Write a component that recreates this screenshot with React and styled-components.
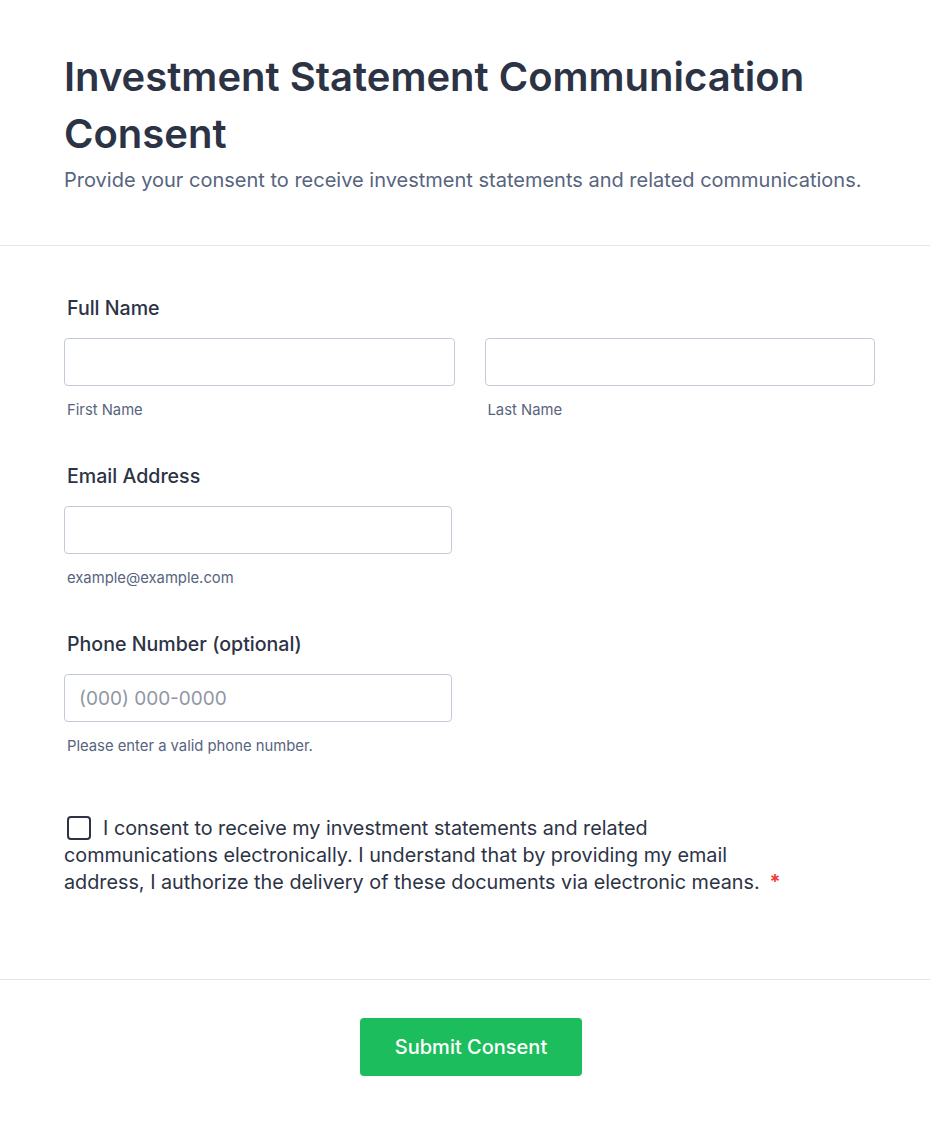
import React from "react";
import styled, { createGlobalStyle } from "styled-components";

const Global = createGlobalStyle`
  html, body { margin: 0; padding: 0; background: #ffffff; }
  body { font-family: Inter, "Noto Sans", sans-serif; color: #2c3345; }
  * { box-sizing: border-box; }
`;

const Page = styled.div`
  width: 930px;
  background: #ffffff;
`;

const Header = styled.header`
  padding: 48px 64px 51px;
  border-bottom: 1px solid #e3e5ee;
`;

const Title = styled.h1`
  margin: 0;
  font-size: 40px;
  line-height: 57px;
  font-weight: 600;
  color: #2c3345;
`;

const Subtitle = styled.p`
  margin: 4px 0 0;
  font-size: 20px;
  line-height: 28px;
  color: #57647e;
`;

const Form = styled.form`
  padding: 48px 55px 83px 64px;
  display: flex;
  flex-direction: column;
  gap: 43px;
  border-bottom: 1px solid #e3e5ee;
`;

const Field = styled.div`
  display: flex;
  flex-direction: column;
`;

const Label = styled.label`
  font-size: 19.6px;
  font-weight: 500;
  line-height: 28px;
  color: #2c3345;
  padding-left: 3px;
  margin-bottom: 16px;
`;

const Row = styled.div`
  display: grid;
  grid-template-columns: ${(p) => p.$cols || "1fr"};
  column-gap: 30px;
`;

const Cell = styled.div`
  display: flex;
  flex-direction: column;
`;

const Input = styled.input`
  width: ${(p) => p.$w || "100%"};
  height: 48px;
  border: 1px solid #c3cad8;
  border-radius: 4px;
  padding: 0 14px;
  font-family: Inter, "Noto Sans", sans-serif;
  font-size: 19px;
  color: #2c3345;
  background: #ffffff;
  outline: none;
  &::placeholder { color: #8f96a3; }
`;

const Sub = styled.span`
  margin-top: 15px;
  padding-left: 3px;
  font-size: 14.8px;
  line-height: 18px;
  color: #57647e;
`;

const Consent = styled.div`
  margin-top: 17px;
  max-width: 730px;
  font-size: 19.8px;
  line-height: 27px;
  color: #2c3345;
`;

const Box = styled.span`
  display: inline-block;
  width: 24px;
  height: 24px;
  border: 2px solid #2c3345;
  border-radius: 4px;
  vertical-align: -5px;
  margin: 0 12px 0 3px;
`;

const Star = styled.span`
  color: #f23a3c;
  margin-left: 10px;
  font-weight: 700;
`;

const Footer = styled.div`
  display: flex;
  justify-content: center;
  padding: 38px 0 49px 12px;
`;

const Button = styled.button`
  width: 222px;
  height: 58px;
  border: none;
  border-radius: 4px;
  background: #1bbd5c;
  color: #ffffff;
  font-family: Inter, "Noto Sans", sans-serif;
  font-size: 20px;
  font-weight: 500;
  cursor: pointer;
`;

export default function App() {
  return (
    <Page>
      <Global />
      <Header>
        <Title>Investment Statement Communication Consent</Title>
        <Subtitle>
          Provide your consent to receive investment statements and related communications.
        </Subtitle>
      </Header>
      <Form onSubmit={(e) => e.preventDefault()}>
        <Field>
          <Label>Full Name</Label>
          <Row $cols="1fr 1fr">
            <Cell>
              <Input type="text" />
              <Sub>First Name</Sub>
            </Cell>
            <Cell>
              <Input type="text" />
              <Sub>Last Name</Sub>
            </Cell>
          </Row>
        </Field>
        <Field>
          <Label>Email Address</Label>
          <Input type="email" $w="388px" />
          <Sub>example@example.com</Sub>
        </Field>
        <Field>
          <Label>Phone Number (optional)</Label>
          <Input type="tel" $w="388px" placeholder="(000) 000-0000" />
          <Sub>Please enter a valid phone number.</Sub>
        </Field>
        <Consent>
          <Box />
          I consent to receive my investment statements and related communications
          electronically. I understand that by providing my email address, I authorize the
          delivery of these documents via electronic means.
          <Star>*</Star>
        </Consent>
      </Form>
      <Footer>
        <Button type="button">Submit Consent</Button>
      </Footer>
    </Page>
  );
}
